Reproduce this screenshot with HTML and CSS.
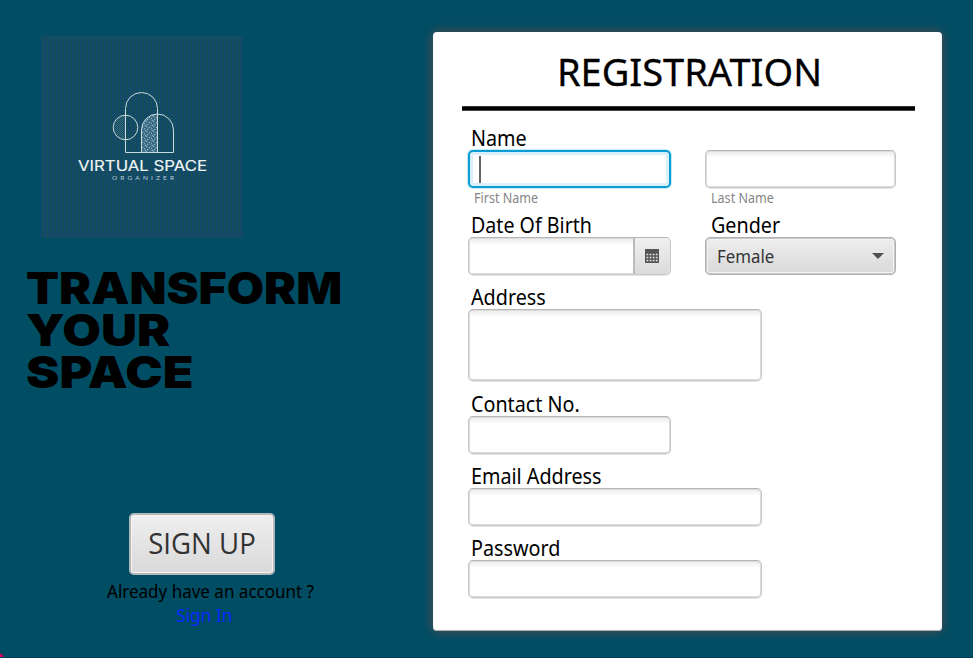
FILE: index.html
```html
<!DOCTYPE html>
<html lang="en">
<head>
<meta charset="utf-8">
<title>Registration</title>
<link rel="stylesheet" href="styles.css">
</head>
<body>
<main class="window">
  <section class="intro">
    <svg class="logo" viewBox="0 0 202 202" width="202" height="202" role="img" aria-label="Virtual Space Organizer">
      <defs>
        <pattern id="weave" width="4" height="4" patternUnits="userSpaceOnUse">
          <rect width="4" height="4" fill="#124b60"/>
          <rect x="0" y="0" width="1" height="1" fill="#15439a"/>
          <rect x="2" y="2" width="1" height="1" fill="#1d5a63"/>
          <rect x="2" y="0" width="1" height="1" fill="#1c4b50"/>
          <rect x="0" y="2" width="1" height="1" fill="#154878"/>
        </pattern>
        <pattern id="speckle" width="7" height="5" patternUnits="userSpaceOnUse">
          <rect width="7" height="5" fill="#47758e"/>
          <path d="M0 0h1v1h-1zM3 1h1v1h-1zM1 3h1v1h-1zM5 2h1v1h-1zM6 4h1v1h-1z" fill="#8fb0bd"/>
          <path d="M2 0h1v1h-1zM4 2h1v1h-1zM0 2h1v1h-1zM6 1h1v1h-1zM3 4h1v1h-1z" fill="#275b70"/>
        </pattern>
        <pattern id="dots" width="2" height="2" patternUnits="userSpaceOnUse">
          <path d="M0 0h1v1h-1zM1 1h1v1h-1z" fill="#3b6d80"/>
        </pattern>
      </defs>
      <rect width="202" height="202" fill="url(#weave)"/>
      <path d="M84.500 79.500a12.300 12.300 0 0 0 0 24.500z" fill="url(#dots)"/>
      <path d="M100.500 116.500V94a16 16 0 0 1 16-16v38.500z" fill="url(#speckle)"/>
      <g fill="none" stroke="#c9dcdf" stroke-width="1">
        <path d="M132.500 116.500h-48V72.500a16 16 0 0 1 32 0v44"/>
        <path d="M100.500 116.500V94a16 16 0 0 1 32 0v22.500"/>
        <circle cx="84.500" cy="91.500" r="12.300"/>
      </g>
      <text class="logo-name" x="37" y="134.500" textLength="129" lengthAdjust="spacingAndGlyphs">VIRTUAL SPACE</text>
      <text class="logo-sub" x="71" y="144.300" textLength="62">ORGANIZER</text>
    </svg>
    <h1 class="headline"><span class="l1">TRANSFORM</span><span class="l2">YOUR</span><span class="l3">SPACE</span></h1>
    <div class="actions">
      <button class="signup" type="button"><span>SIGN UP</span></button>
      <p class="account">Already have an account ?</p>
      <a class="signin">Sign In</a>
    </div>
  </section>
  <form class="card">
    <h2 class="title">REGISTRATION</h2>
    <div class="rule"></div>
    <div class="fields">
      <div class="pair names">
        <div class="field"><span class="label t-name">Name</span><div class="input focused"><i class="caret"></i></div><span class="hint">First Name</span></div>
        <div class="field"><span class="label"></span><div class="input"></div><span class="hint">Last Name</span></div>
      </div>
      <div class="pair">
        <div class="field"><span class="label t-dob">Date Of Birth</span>
          <div class="input date"><div class="picker">
            <svg width="14" height="15" viewBox="0 0 14 15"><path d="M0 0h14v14H0z" fill="#555"/><path d="M1.500 5.500h12M1.500 8.500h12M1.500 11.500h12" stroke="#e6e6e6" stroke-width="1.500" stroke-dasharray="1.800 1.300"/></svg>
          </div></div>
        </div>
        <div class="field"><span class="label t-gender">Gender</span>
          <div class="input select"><span>Female</span><svg width="12" height="7" viewBox="0 0 12 7"><path d="M0 0h12L6 6z" fill="#505050"/></svg></div>
        </div>
      </div>
      <div class="field address"><span class="label t-address">Address</span><div class="input area"></div></div>
      <div class="field contact"><span class="label t-contact">Contact No.</span><div class="input short"></div></div>
      <div class="field email"><span class="label t-email">Email Address</span><div class="input"></div></div>
      <div class="field email"><span class="label t-password">Password</span><div class="input"></div></div>
    </div>
  </form>
</main>
</body>
</html>
```

FILE: styles.css
```css
* { box-sizing: border-box; }
body { margin: 0; background: #004d64; font-family: "Noto Sans", "Open Sans", sans-serif; color: #000; }
.window { display: flex; width: 973px; height: 658px; overflow: hidden; border-bottom: 1px solid #003c5c;
  background: radial-gradient(circle at 0 100%, #c3005f 0 3px, transparent 4px) #004d64; }
.intro { width: 433px; padding: 36px 0 0 27px; display: flex; flex-direction: column; }
.logo { display: block; margin-left: 14px; }
.logo-name { font: 400 15px Inter, sans-serif; fill: #f0f6f4; stroke: #f0f6f4; stroke-width: .15px; }
.logo-sub { font: 6.500px Lato, sans-serif; fill: #bdd0d6; }
.headline { margin: 29px 0 0 -1px; font: 900 44px/42px Inter, "Liberation Sans", sans-serif; }
.headline span { display: block; width: max-content; transform-origin: 0 50%; }
.l1 { transform: scaleX(1.094); }
.l2 { transform: scaleX(1.135); }
.l3 { transform: scaleX(1.14); }
.actions { width: 146px; margin: 120px 0 0 102px; display: flex; flex-direction: column; align-items: center; white-space: nowrap; }
.signup { width: 146px; height: 62px; padding: 0 0 4px; border: 2px solid #b5b8ba; border-radius: 5px; color: #333;
  background: linear-gradient(#efefef, #d9d9d9); box-shadow: inset 0 0 0 1px #f4f4f4; font: 29.500px "Open Sans", sans-serif; }
.signup span { display: block; transform: scaleX(.935); }
.account { margin: 4px 0 0; font-size: 18px; line-height: 24px; transform: translateX(8px) scaleX(.945); }
.signin { color: #0a28ff; font-size: 18px; line-height: 24px; transform: translateX(2px) scaleX(.96); }
.card { width: 509px; height: 599px; margin-top: 32px; border-radius: 4px; background: #fff;
  box-shadow: inset 0 -1px 1px #aaa, 0 0 11px #604a4c; }
.title { margin: 16px 0 0 4px; font-size: 38px; line-height: 46px; font-weight: 400; text-align: center; -webkit-text-stroke: .3px #000; }
.rule { height: 5px; margin: 12px 27px 0 29px; background: linear-gradient(#333 1px, #000 1px 4px, #444 4px); }
.fields { margin: 13px 0 0 35px; width: 428px; }
.pair { display: grid; grid-template-columns: 203px 191px; column-gap: 34px; }
.names { height: 87px; }
.field { display: flex; flex-direction: column; }
.label { height: 26px; margin-left: 3px; align-self: flex-start; font-size: 21px; line-height: 28px; white-space: nowrap; transform: scaleX(.94); transform-origin: 0 50%; }
.t-dob { transform: scaleX(.935); }
.input { height: 38px; border: 1px solid; border-color: #b5b5b5 #c8c8c8 #cacaca; border-radius: 5px; background: linear-gradient(#eaeaea, #fff 7px);
  box-shadow: inset 0 0 0 1px #dcdcdc, 0 .5px 0 #ccc; }
.focused { border: 2px solid #0b9cd3; box-shadow: 0 0 0 1px #c5eaf6, inset 0 0 0 3px #d9f0f8; background: #fff; padding: 4px 0 0 9px; }
.caret { display: block; width: 2px; height: 27px; background: #666; }
.hint { margin-left: 6px; align-self: flex-start; font-size: 13.500px; line-height: 21px; color: #858585; white-space: nowrap; transform: scaleX(.93); transform-origin: 0 50%; }
.date { display: flex; justify-content: flex-end; }
.picker { width: 37px; padding-right: 2px; border-left: 2px solid #bbb; border-radius: 0 4px 4px 0; display: flex; align-items: center; justify-content: center; background: linear-gradient(#f0f0f0, #dadada); }
.select { display: flex; align-items: center; justify-content: space-between; padding: 0 11px; border-color: #b0b0b0; color: #333; font-size: 18px; background: linear-gradient(#eee, #d9d9d9); box-shadow: inset 0 0 0 1px #c8c8c8, inset 0 0 0 2px #f2f2f2; }
.select span { transform: scaleX(.935); transform-origin: 0 50%; }
.t-gender { margin-left: 6px; }
.address { width: 294px; margin-top: 8px; }
.area { height: 72px; }
.contact { margin-top: 9px; }
.short { width: 203px; }
.email { width: 294px; margin-top: 8px; }
```
